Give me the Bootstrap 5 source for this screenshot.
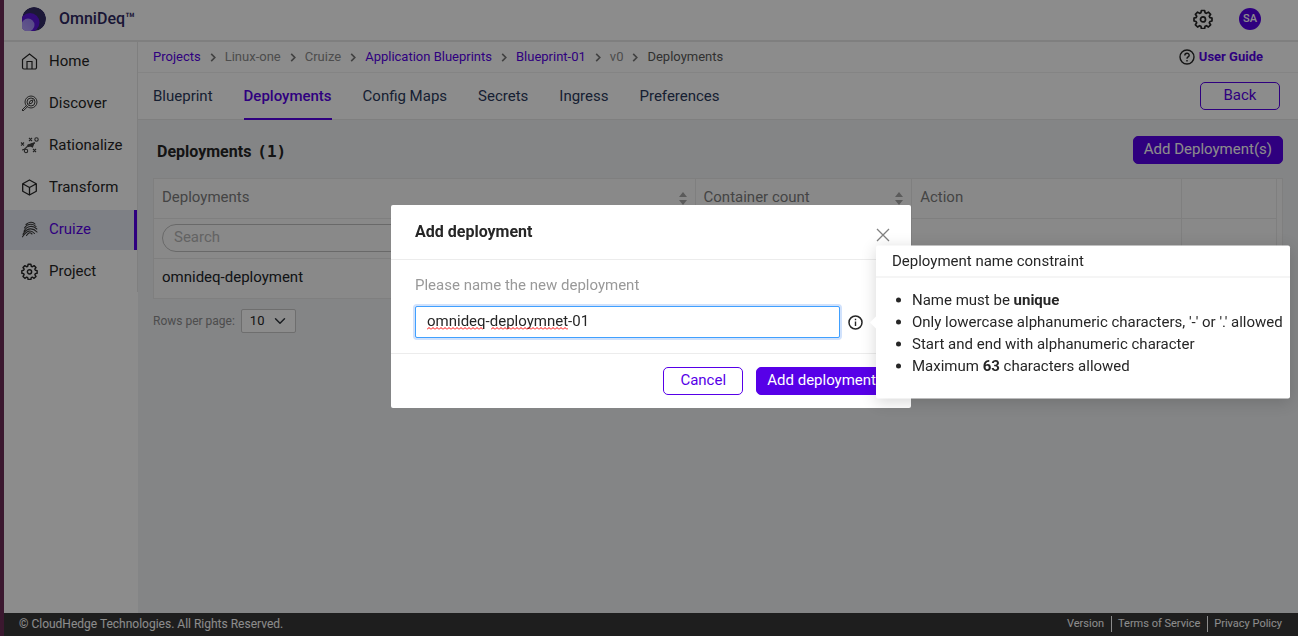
<!DOCTYPE html>
<html lang="en">
<head>
<meta charset="utf-8">
<meta name="viewport" content="width=device-width, initial-scale=1">
<title>OmniDeq – Deployments</title>
<link href="https://cdn.jsdelivr.net/npm/bootstrap@5.3.0/dist/css/bootstrap.min.css" rel="stylesheet">
<style>
:root { --brand: #5700e8; --line: #e8e8e8; --ink: #262626; }
body { font-family: Roboto, "Liberation Sans", sans-serif; font-size: 15px; line-height: 22px; color: var(--ink); border-left: 4px solid #3b182f; background: #f0f2f5; }
a { text-decoration: none; color: var(--brand); }
svg { flex: none; display: block; }
.topbar { height: 42px; border-bottom: 2px solid var(--line); padding: 0 37px 2px 17px; }
.brand { font-size: 16px; font-weight: 500; color: #2f2862; }
.tools { gap: 26px; }
.avatar { width: 22px; height: 22px; font-size: 11px; font-weight: 500; background: var(--brand); }
.sidebar { width: 134px; }
.sidebar .nav { gap: 2px; border-right: 1px solid var(--line); }
.sidebar .nav-link { height: 40px; padding: 0 0 2px 17px; color: var(--ink); gap: 11px; border-right: 3px solid transparent; }
.sidebar .nav-link.active { color: var(--brand); background: #e6e9f3; border-color: var(--brand); }
.crumb-row { height: 31px; border-bottom: 1px solid #f0f0f0; padding: 0 35px 0 15px; font-size: 13px; }
.crumb-row .breadcrumb { gap: 9px; color: #8c8c8c; }
.crumb-row li { display: flex; align-items: center; gap: 9px; }
.crumb-row .here { color: #595959; }
.tab-row { height: 47px; border-bottom: 1px solid var(--line); padding: 0 18px 0 15px; }
.tab-row .nav { gap: 31px; }
.tab-row .nav-link { padding: 12px 0 11px; color: #2b3a5c; border-bottom: 2px solid transparent; }
.tab-row .nav-link.active { color: var(--brand); border-color: var(--brand); font-weight: 500; }
.act { height: 28px; font-size: 15px; line-height: 22px; padding: 1px 10px 3px; border-radius: 5px; min-width: 80px;
  --bs-btn-color: var(--brand); --bs-btn-border-color: var(--brand); --bs-btn-bg: #fff; --bs-btn-hover-color: var(--brand); --bs-btn-hover-border-color: var(--brand); }
.act-fill { --bs-btn-color: #fff; --bs-btn-bg: var(--brand); --bs-btn-hover-color: #fff; --bs-btn-hover-bg: var(--brand); }
.content-area { padding: 16px 15px; }
.page-title { font-size: 16px; line-height: 22px; font-weight: 700; padding: 5px 0 0 4px; }
.count { font-family: "DejaVu Sans Mono", monospace; margin-left: 2px; }
.grid-box { margin-top: 14px; border: 1px solid var(--line); background: #fafafa; padding-right: 5px; }
.grid-box table { table-layout: fixed; --bs-table-bg: transparent; }
.grid-box th, .grid-box td { height: 40px; padding: 0 8px 3px; vertical-align: middle; border: 0 solid var(--line); border-right-width: 1px; border-bottom-width: 1px; }
.grid-box th { height: 39px; font-weight: 400; color: #7d7d7d; }
.grid-box tbody tr:last-child td { border-bottom: 0; }
.col-name { width: 48.2%; } .col-count { width: 19.3%; } .col-act { width: 24%; }
.search-box { height: 28px; font-size: 15px; border-radius: 14px; padding: 0 11px 2px; border-color: #bfbfbf; background: transparent; margin-top: 3px; }
.search-box::placeholder { color: #b5b5b5; }
.pager { margin-top: 10px; gap: 6px; font-size: 12px; color: #8c8c8c; }
.pager .form-select { width: 55px; height: 24px; padding: 0 8px; font-size: 13px; line-height: 22px; border-radius: 2px; border-color: #c8c8c8; color: var(--ink);
  background-position: right 9px center; background-size: 12px; }
.foot { background: #383838; color: #fff; font-size: 12px; line-height: 16px; padding: 3px 16px 4px 15px; }
.foot nav { font-size: 11px; }
.foot a { color: #fff; padding: 0 7px 0 6px; }
.foot a + a { border-left: 1px solid #fff; }
.foot a:last-child { padding-right: 0; }
.shade { left: 4px; width: auto; right: 0; --bs-backdrop-opacity: .45; }
.ask { left: 4px; right: 0; width: auto; bottom: 23px; height: auto; --bs-modal-width: 520px; }
.ask .modal-dialog { margin: 0 auto; min-height: 100%; }
.ask .modal-content { border: 0; border-radius: 2px; color: var(--ink); }
.ask .modal-header { padding: 16px 20px 16px 24px; height: 55px; border-color: #ececec; border-radius: 0; }
.ask .modal-title { font-size: 16px; line-height: 22px; font-weight: 700; }
.ask .modal-body { padding: 14px 24px 15px; }
.ask .form-label { color: #999; margin: 0 0 10px; display: block; }
.ask .modal-footer { padding: 13px 24px; gap: 13px; border-color: #ececec; }
.ask .modal-footer > * { margin: 0; }
.name-box { width: 425px; }
.name-box .form-control { height: 32px; font-size: 15px; padding: 0 11px 2px; color: var(--ink); border: 1px solid #40a0ff; border-radius: 2px; box-shadow: 0 0 0 2px #d1e2fc; }
.squiggle { position: absolute; left: 12px; bottom: 8px; pointer-events: none; }
.dismiss { background: none; border: 0; padding: 0; margin-top: 6px; }
.hint { position: absolute; left: calc(100% + 13px); top: 50%; transform: translateY(-50%); width: 414px; white-space: nowrap; background: #fff; border-radius: 2px; box-shadow: 0 3px 16px rgba(0,0,0,.16); }
.hint::before { content: ""; position: absolute; left: -6px; top: calc(50% - 6px); border: 6px solid transparent; border-right-color: #fff; border-left: 0; }
.hint-title { padding: 4px 16px 5px; border-bottom: 1px solid #ececec; }
.hint ul { padding: 11px 8px 22px 36px; margin: 0; }
</style>
</head>
<body class="d-flex flex-column min-vh-100">
<svg width="0" height="0" class="position-absolute" aria-hidden="true">
  <symbol id="gear" viewBox="0 0 20 20"><path fill="none" stroke="currentColor" stroke-width="1.7" stroke-linejoin="round" d="M8.4 1.5h3.2l.5 2.3 1.3.6 2-1.3 2.2 2.2-1.3 2 .6 1.3 2.1.4v3l-2.1.5-.6 1.3 1.3 2-2.2 2.200-2-1.300-1.300.600-.5 2.200H8.400l-.5-2.200-1.300-.6-2 1.300-2.200-2.200 1.300-2-.6-1.300L1 12V9l2.100-.4.6-1.300-1.300-2 2.200-2.200 2 1.300 1.300-.6z"/><circle cx="10" cy="10.400" r="2.500" fill="none" stroke="currentColor" stroke-width="1.700"/></symbol>
  <symbol id="chev" viewBox="0 0 6 10"><path d="M1 1l4 4-4 4" fill="none" stroke="#777" stroke-width="1.8"/></symbol>
  <symbol id="sorter" viewBox="0 0 8 13"><path d="M0 5l4-5 4 5zM0 8h8l-4 5z" fill="#a6a6a6"/></symbol>
</svg>

<header class="topbar bg-white d-flex align-items-center justify-content-between">
  <div class="brand d-flex align-items-center gap-2">
    <svg width="26" height="26" viewBox="0 0 26 26" class="me-1"><defs><linearGradient id="lg" x1="0" y1="1" x2="1" y2="0"><stop offset="0" stop-color="#b9a6ff"/><stop offset="1" stop-color="#9a80f5"/></linearGradient><clipPath id="disc"><path d="M1 13A12 12 0 1 1 13 25H1z"/></clipPath></defs><g clip-path="url(#disc)"><circle cx="13" cy="13" r="12" fill="#332c66"/><circle cx="9" cy="16.500" r="9.500" fill="#5b14dc"/><circle cx="7" cy="19" r="6.500" fill="url(#lg)"/></g></svg>
    <span>OmniDeq™</span>
  </div>
  <div class="tools d-flex align-items-center">
    <svg width="20" height="20"><use href="#gear"/></svg>
    <span class="avatar rounded-circle text-white d-flex align-items-center justify-content-center">SA</span>
  </div>
</header>

<div class="d-flex flex-grow-1">
  <aside class="sidebar bg-white flex-shrink-0">
    <nav class="nav flex-column">
      <a class="nav-link d-flex align-items-center" href="#"><svg width="17" height="17" viewBox="0 0 17 17" fill="none" stroke="currentColor" stroke-width="1.200"><path d="M1.500 6.500l7-5.500 7 5.500v8a1.500 1.500 0 0 1-1.500 1.500H3a1.500 1.500 0 0 1-1.500-1.500zM6 16V8.500h5V16"/></svg>Home</a>
      <a class="nav-link d-flex align-items-center" href="#"><svg width="17" height="17" viewBox="0 0 17 17" fill="none" stroke="#444" stroke-width="1"><circle cx="10" cy="7" r="6"/><circle cx="10" cy="7" r="4"/><path d="M8 9l1-3 3-1-1 3zM5.500 10.500L1 15l1 1 4.700-4.500"/></svg>Discover</a>
      <a class="nav-link d-flex align-items-center" href="#"><svg width="19" height="17" viewBox="0 0 19 17" fill="none" stroke="#444" stroke-width="1.100" style="margin:0 -1px"><path d="M1 5.500l3 3m0-3l-3 3M9 1l3 3m0-3L9 4m4 8l3 3m0-3l-3 3M2 13c4 0 4-3.500 7-5l6-2"/><circle cx="16.500" cy="2.500" r="1.700"/><circle cx="6" cy="14" r="1.700"/><path d="M8 8l6-2-1.500 4-2-1-2.500.500z" fill="#444"/></svg>Rationalize</a>
      <a class="nav-link d-flex align-items-center" href="#"><svg width="17" height="17" viewBox="0 0 17 17" fill="none" stroke="currentColor" stroke-width="1.300" stroke-linejoin="round"><path d="M8.500 1l6.800 3.700v7.600L8.500 16l-6.800-3.700V4.700zM1.700 4.700l6.800 3.800 6.800-3.800M8.500 8.500V16"/></svg>Transform</a>
      <a class="nav-link active d-flex align-items-center" href="#"><svg width="17" height="17" viewBox="0 0 17 17" fill="none" stroke="#383838" stroke-width="1.100" stroke-linecap="round"><path d="M5 3.500C8 .5 12 .5 14 3M3.500 7C6 2.500 12 2 15 5.500M3 10.200C6 4.500 12 4 15.800 8M2 13.200C6 6.500 12 6.500 16 11M1.500 15.800C6 9 10 8.500 13.500 12.500M5.500 14.500c2-3 3.500-3.500 5.500-1.500"/></svg>Cruize</a>
      <a class="nav-link d-flex align-items-center" href="#"><svg width="17" height="17"><use href="#gear"/></svg>Project</a>
    </nav>
  </aside>

  <main class="flex-grow-1">
    <div class="crumb-row bg-white d-flex align-items-center justify-content-between">
      <ol class="breadcrumb m-0">
        <li><a href="#">Projects</a><svg width="6" height="9"><use href="#chev"/></svg></li>
        <li>Linux-one<svg width="6" height="9"><use href="#chev"/></svg></li>
        <li>Cruize<svg width="6" height="9"><use href="#chev"/></svg></li>
        <li><a href="#">Application Blueprints</a><svg width="6" height="9"><use href="#chev"/></svg></li>
        <li><a href="#">Blueprint-01</a><svg width="6" height="9"><use href="#chev"/></svg></li>
        <li>v0<svg width="6" height="9"><use href="#chev"/></svg></li>
        <li class="here">Deployments</li>
      </ol>
      <a href="#" class="d-flex align-items-center fw-bold"><svg width="16" height="16" viewBox="0 0 16 16" fill="none" stroke="#262626" stroke-width="1.400" class="me-1"><circle cx="8" cy="8" r="7"/><path d="M5.800 6.500c0-3 4.400-3 4.400-.2C10.200 8 8 7.800 8 9.700M8 10.900v1.500"/></svg>User Guide</a>
    </div>
    <div class="tab-row bg-white d-flex justify-content-between align-items-center">
      <nav class="nav">
        <a class="nav-link" href="#">Blueprint</a>
        <a class="nav-link active" href="#">Deployments</a>
        <a class="nav-link" href="#">Config Maps</a>
        <a class="nav-link" href="#">Secrets</a>
        <a class="nav-link" href="#">Ingress</a>
        <a class="nav-link" href="#">Preferences</a>
      </nav>
      <button type="button" class="btn act">Back</button>
    </div>
    <section class="content-area">
      <div class="d-flex justify-content-between">
        <h1 class="page-title m-0">Deployments <span class="count">(1)</span></h1>
        <button type="button" class="btn act act-fill">Add Deployment(s)</button>
      </div>
      <div class="grid-box">
        <table class="table m-0">
          <colgroup><col class="col-name"><col class="col-count"><col class="col-act"><col></colgroup>
          <thead>
            <tr>
              <th><div class="d-flex justify-content-between align-items-center">Deployments<svg width="8" height="13" class="mt-1"><use href="#sorter"/></svg></div></th>
              <th><div class="d-flex justify-content-between align-items-center">Container count<svg width="8" height="13" class="mt-1"><use href="#sorter"/></svg></div></th>
              <th>Action</th><th></th>
            </tr>
          </thead>
          <tbody>
            <tr><td><input type="text" class="form-control search-box" placeholder="Search" aria-label="Search deployments"></td><td></td><td></td><td></td></tr>
            <tr><td>omnideq-deployment</td><td></td><td></td><td></td></tr>
          </tbody>
        </table>
      </div>
      <div class="pager d-flex align-items-center">
        <label for="rows">Rows per page:</label>
        <select id="rows" class="form-select"><option>10</option><option>25</option><option>50</option></select>
      </div>
    </section>
  </main>
</div>

<footer class="foot d-flex justify-content-between align-items-center">
  <span>© CloudHedge Technologies. All Rights Reserved.</span>
  <nav class="d-flex"><a href="#">Version</a><a href="#">Terms of Service</a><a href="#">Privacy Policy</a></nav>
</footer>

<div class="modal-backdrop show shade"></div>
<div class="modal show d-block ask" role="dialog" aria-labelledby="ask-title">
  <div class="modal-dialog modal-dialog-centered">
    <form class="modal-content">
      <div class="modal-header align-items-start">
        <h2 class="modal-title" id="ask-title">Add deployment</h2>
        <button type="button" class="dismiss" aria-label="Close"><svg width="16" height="16" viewBox="0 0 16 16"><path d="M2 2l12 12M14 2L2 14" stroke="#808080" stroke-width="1.300"/></svg></button>
      </div>
      <div class="modal-body">
        <label class="form-label" for="dep-name">Please name the new deployment</label>
        <div class="d-flex align-items-center gap-2">
          <div class="name-box position-relative">
            <input id="dep-name" type="text" class="form-control" value="omnideq-deploymnet-01" spellcheck="false">
            <svg class="squiggle" width="141" height="3" aria-hidden="true"><defs><pattern id="wave" width="4" height="3" patternUnits="userSpaceOnUse"><path d="M0 2.500L2 .5l2 2" fill="none" stroke="#f00" stroke-width="1"/></pattern></defs><rect width="56" height="3" fill="url(#wave)"/><rect x="64" width="77" height="3" fill="url(#wave)"/></svg>
          </div>
          <div class="position-relative">
            <svg width="15" height="15" viewBox="0 0 15 15"><circle cx="7.500" cy="7.500" r="6.500" fill="none" stroke="#262626" stroke-width="1.500"/><path d="M7.500 6.500V11M7.500 3.800v1.500" stroke="#262626" stroke-width="1.400"/></svg>
            <div class="hint" role="tooltip">
              <div class="hint-title">Deployment name constraint</div>
              <ul>
                <li>Name must be <b>unique</b></li>
                <li>Only lowercase alphanumeric characters, '-' or '.' allowed</li>
                <li>Start and end with alphanumeric character</li>
                <li>Maximum <b>63</b> characters allowed</li>
              </ul>
            </div>
          </div>
        </div>
      </div>
      <div class="modal-footer">
        <button type="button" class="btn act">Cancel</button>
        <button type="submit" class="btn act act-fill">Add deployment</button>
      </div>
    </form>
  </div>
</div>
<script src="https://cdn.jsdelivr.net/npm/bootstrap@5.3.0/dist/js/bootstrap.bundle.min.js"></script>
</body>
</html>
